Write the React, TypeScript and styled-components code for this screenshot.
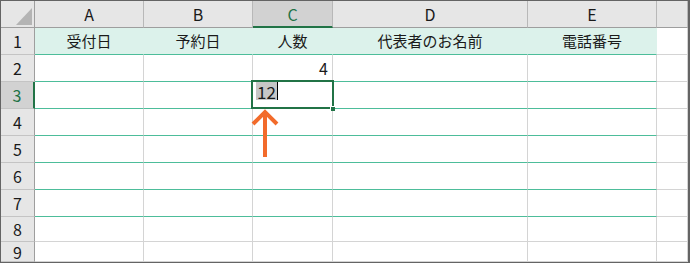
import { Fragment } from "react";
import styled, { createGlobalStyle } from "styled-components";

const GREEN = "#217346";
const BAND = "#4dbd9a";
const MINT = "#dcf2eb";
const GRID = "#d4d4d4";
const HEAD_BG = "#e6e6e6";
const HEAD_ACTIVE = "#d2d2d2";

const GlobalStyle = createGlobalStyle`
  body {
    margin: 0;
    background: #fff;
    font-family: "Noto Sans CJK JP", "Noto Sans", sans-serif;
  }
`;

const Sheet = styled.div`
  position: relative;
  width: 690px;
  height: 263px;
  box-sizing: border-box;
  border: 1px solid #646464;
  border-right-width: 2px;
  display: grid;
  grid-template-columns: 34px 109px 109px 80px 195px 129px 1fr;
  grid-template-rows: repeat(8, 27px) 25px 1fr;
  background: #fff;
  overflow: hidden;
  font-size: 15px;
  color: #1a1a1a;
`;

const Corner = styled.div`
  background: ${HEAD_BG};
  border-right: 1px solid #9e9e9e;
  border-bottom: 1px solid #9e9e9e;
  display: flex;
  align-items: flex-end;
  justify-content: flex-end;
  padding: 0 2px 2px 0;
`;

const CornerMark = styled.div`
  width: 16px;
  height: 17px;
  background: #b4b4b4;
  clip-path: polygon(100% 0, 100% 100%, 0 100%);
`;

const ColHead = styled.div<{ $active?: boolean }>`
  background: ${(p) => (p.$active ? HEAD_ACTIVE : HEAD_BG)};
  color: ${(p) => (p.$active ? GREEN : "#1a1a1a")};
  border-right: 1px solid #b8b8b8;
  border-bottom: ${(p) => (p.$active ? `2px solid ${GREEN}` : "1px solid #9e9e9e")};
  display: flex;
  align-items: center;
  justify-content: center;
  line-height: 1;
  font-size: 16px;
  padding-bottom: ${(p) => (p.$active ? "0" : "1px")};
`;

const RowHead = styled.div<{ $active?: boolean }>`
  background: ${(p) => (p.$active ? HEAD_ACTIVE : HEAD_BG)};
  color: ${(p) => (p.$active ? GREEN : "#1a1a1a")};
  border-right: ${(p) => (p.$active ? `2px solid ${GREEN}` : "1px solid #9e9e9e")};
  border-bottom: 1px solid #c4c4c4;
  display: flex;
  align-items: center;
  justify-content: center;
  line-height: 1;
  font-size: 16px;
`;

const Cell = styled.div<{
  $title?: boolean;
  $band?: boolean;
  $align?: "left" | "center" | "right";
}>`
  position: relative;
  background: ${(p) => (p.$title ? MINT : "#fff")};
  border-right: 1px solid ${(p) => (p.$title ? MINT : GRID)};
  border-bottom: 1px solid ${(p) => (p.$band ? BAND : GRID)};
  display: flex;
  align-items: center;
  justify-content: ${(p) =>
    p.$align === "center" ? "center" : p.$align === "right" ? "flex-end" : "flex-start"};
  padding: 0 4px 1px;
  line-height: 1;
  white-space: nowrap;
`;

const Number = styled.span`
  font-size: 16px;
`;

const EditCell = styled(Cell)`
  align-items: flex-start;
  padding: 0 0 0 3px;
`;

const Selected = styled.span`
  background: #c6c6c6;
  height: 18px;
  line-height: 19px;
  font-size: 17px;
  padding: 0 1px;
`;

const Caret = styled.span`
  width: 1px;
  height: 18px;
  background: #000;
`;

const ActiveFrame = styled.div`
  position: absolute;
  top: -2px;
  left: -2px;
  right: -2px;
  bottom: -1px;
  border: 2px solid ${GREEN};
  z-index: 2;
  pointer-events: none;
`;

const FillHandle = styled.div`
  position: absolute;
  right: -3px;
  bottom: -4px;
  width: 4px;
  height: 4px;
  background: ${GREEN};
  box-shadow: -1px -1px 0 #fff;
`;

const Arrow = styled.svg`
  position: absolute;
  left: -2px;
  top: 26px;
  z-index: 3;
`;

type Col = { key: string; title: string };

const COLUMNS: Col[] = [
  { key: "A", title: "受付日" },
  { key: "B", title: "予約日" },
  { key: "C", title: "人数" },
  { key: "D", title: "代表者のお名前" },
  { key: "E", title: "電話番号" },
];

const ROWS = [1, 2, 3, 4, 5, 6, 7, 8, 9];
const VALUES: Record<string, string> = { C2: "4" };

const UpArrow = () => (
  <Arrow width="28" height="50" viewBox="0 0 28 50">
    <g stroke="#f26b2b" strokeWidth="4" fill="none">
      <polyline points="2,16 14,4 26,16" strokeLinejoin="miter" />
      <line x1="14" y1="5" x2="14" y2="49" />
    </g>
  </Arrow>
);

const SheetCell = ({ col, row }: { col: Col; row: number }) => {
  const ref = `${col.key}${row}`;
  if (ref === "C3") {
    return (
      <EditCell $band>
        <Selected>12</Selected>
        <Caret />
        <ActiveFrame>
          <FillHandle />
        </ActiveFrame>
        <UpArrow />
      </EditCell>
    );
  }
  if (row === 1) {
    return (
      <Cell $title $band $align="center">
        {col.title}
      </Cell>
    );
  }
  const value = VALUES[ref];
  return (
    <Cell $band={row <= 7} $align={value ? "right" : "left"}>
      {value && <Number>{value}</Number>}
    </Cell>
  );
};

export default function App() {
  return (
    <>
      <GlobalStyle />
      <Sheet>
        <Corner>
          <CornerMark />
        </Corner>
        {COLUMNS.map((col) => (
          <ColHead key={col.key} $active={col.key === "C"}>
            {col.key}
          </ColHead>
        ))}
        <ColHead />
        {ROWS.map((row) => (
          <Fragment key={row}>
            <RowHead $active={row === 3}>{row}</RowHead>
            {COLUMNS.map((col) => (
              <SheetCell key={col.key} col={col} row={row} />
            ))}
            <Cell />
          </Fragment>
        ))}
      </Sheet>
    </>
  );
}
